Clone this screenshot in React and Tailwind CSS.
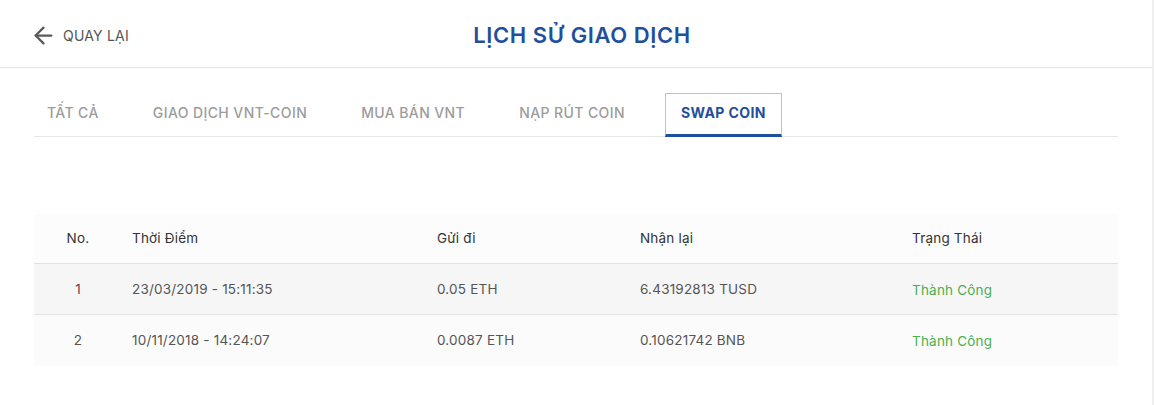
import React from 'react';
import { ArrowLeft } from 'lucide-react';

const tabs = ['Tất cả', 'Giao dịch VNT-Coin', 'Mua bán VNT', 'Nạp rút coin', 'Swap coin'];

const rows = [
    { no: 1, time: '23/03/2019 - 15:11:35', sent: '0.05 ETH', received: '6.43192813 TUSD', status: 'Thành Công' },
    { no: 2, time: '10/11/2018 - 14:24:07', sent: '0.0087 ETH', received: '0.10621742 BNB', status: 'Thành Công' },
];

const cols = 'grid grid-cols-[88px_305px_203px_272px_1fr] items-center';

const App = () => {
    const active = 4;

    return (
        <div className="flex min-h-[405px] bg-white font-['Inter',sans-serif]">
            <div className="w-[1152px] flex-shrink-0">
                {/* Header */}
                <div className="h-[68px] border-b border-[#e6e6e6] grid grid-cols-[1fr_auto_1fr] items-center px-[30px] pt-[4px]">
                    <button className="flex items-center gap-[6px] text-[#555555] text-[14px] uppercase">
                        <ArrowLeft size={27} strokeWidth={2} className="text-[#5a5a5a]" />
                        <span className="tracking-[0.2px]">Quay lại</span>
                    </button>
                    <h1 className="text-[#1f4f9d] text-[22px] font-semibold uppercase tracking-[0.6px] pl-[12px]">
                        Lịch sử giao dịch
                    </h1>
                    <div />
                </div>

                {/* Tabs */}
                <div className="mx-[34px] mt-[24px] flex items-end border-b border-[#e6e6e6] h-[45px]">
                    <div className="flex items-end gap-[26px] -ml-[1px]">
                        {tabs.map((t, i) => (
                            <div
                                key={t}
                                className={
                                    i === active
                                        ? 'h-[44px] -mb-[1px] px-[15px] pb-[3px] flex items-center border border-[#a8c4f2] border-b-[3px] border-b-[#1f4f9d] text-[#1f4f9d] font-bold text-[14px] uppercase tracking-[0.4px]'
                                        : 'h-[44px] px-[14px] pb-[4px] flex items-center text-[#9c9c9c] font-medium text-[14px] uppercase tracking-[0.4px]'
                                }
                            >
                                {t}
                            </div>
                        ))}
                    </div>
                </div>

                {/* Table */}
                <div className="mx-[34px] mt-[77px] text-[13.5px] tracking-[0.2px]">
                    <div className={`${cols} h-[50px] bg-[#fcfcfc] border-b border-[#e3e3e3] text-[#333333]`}>
                        <div className="text-center">No.</div>
                        <div className="pl-[10px]">Thời Điểm</div>
                        <div className="pl-[10px]">Gửi đi</div>
                        <div className="pl-[10px]">Nhận lại</div>
                        <div className="pl-[10px]">Trạng Thái</div>
                    </div>
                    {rows.map((r, i) => (
                        <div
                            key={r.no}
                            className={`${cols} h-[51px] text-[#555555] ${i === 0 ? 'bg-[#f6f6f6] border-b border-[#e3e3e3]' : 'bg-[#fbfbfb]'}`}
                        >
                            <div className={`text-center ${i === 0 ? 'text-[#7a3b47]' : ''}`}>{r.no}</div>
                            <div className="pl-[10px]">{r.time}</div>
                            <div className="pl-[10px]">{r.sent}</div>
                            <div className="pl-[10px]">{r.received}</div>
                            <div className="pl-[10px] text-[#4caf50] pt-[2px]">{r.status}</div>
                        </div>
                    ))}
                </div>
            </div>
            <div className="flex-1 bg-[#efefef]" />
        </div>
    );
};

export default App;
